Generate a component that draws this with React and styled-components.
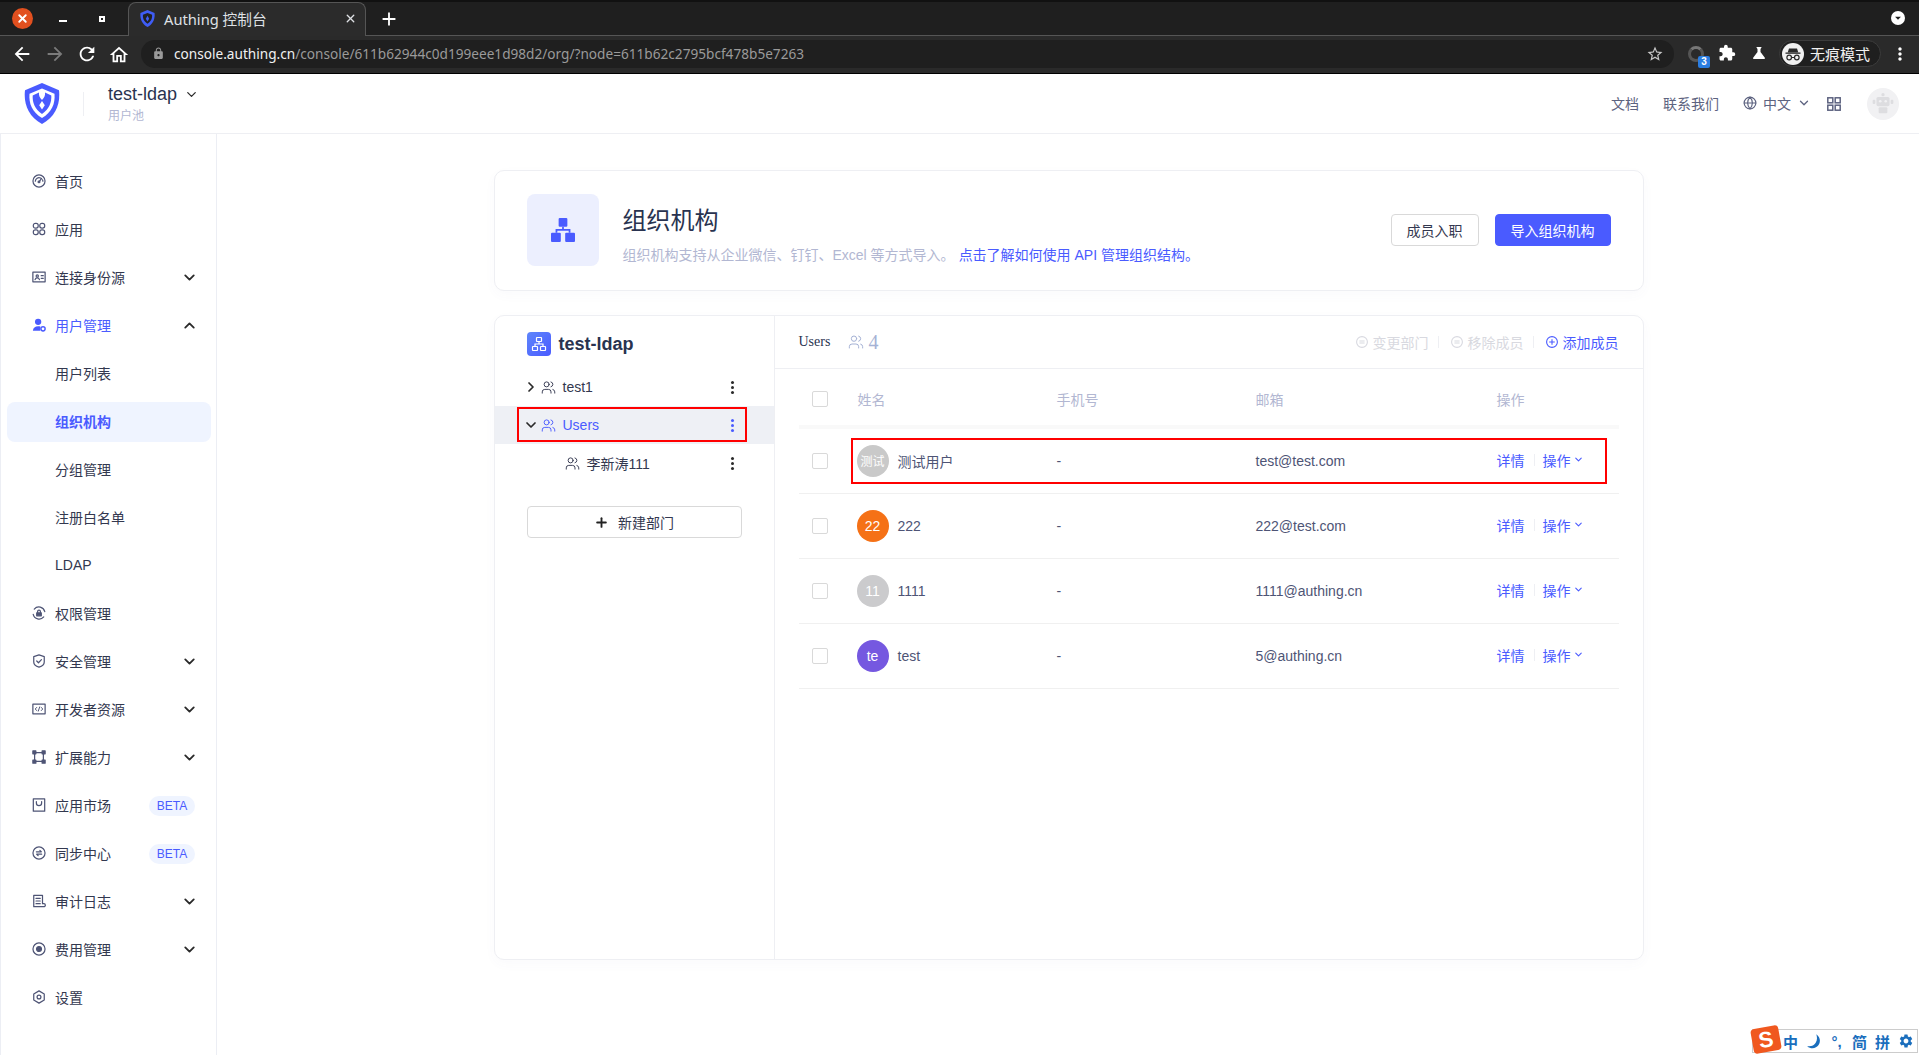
import React from 'react'
import styled, { createGlobalStyle } from 'styled-components'
import { ChevronDown, ChevronUp, ChevronRight, Users as UsersIcon, Plus, Globe, X } from 'lucide-react'
import {
  MdArrowBack,
  MdArrowForward,
  MdRefresh,
  MdOutlineHome,
  MdLock,
  MdStarBorder,
  MdExtension,
  MdScience,
  MdMoreVert,
  MdArrowDropDown,
  MdAdd,
  MdSettings,
} from 'react-icons/md'

const BLUE = '#4a5bff'
const FONT = '"Liberation Sans", "Noto Sans CJK SC", sans-serif'

const GlobalStyle = createGlobalStyle`
  * { box-sizing: border-box; }
  html, body { margin: 0; padding: 0; background: #fff; }
  body { font-family: ${FONT}; font-size: 14px; color: #33384f; overflow: hidden; }
`

/* ---------- icons ---------- */

const Svg = ({ children, size = 14, fill = 'none', color = 'currentColor' }) => (
  <svg width={size} height={size} viewBox="0 0 16 16" fill={fill} stroke={color} strokeWidth="1.4" strokeLinecap="round" strokeLinejoin="round">
    {children}
  </svg>
)

const navIcons = {
  home: (
    <Svg>
      <circle cx="8" cy="8" r="6.9" />
      <path d="M3.8 8.2a4.2 4.2 0 0 1 6-3.6M12 6.6c.3.5.4 1 .4 1.6M8 9l3-4" />
      <circle cx="8" cy="9" r="1" />
    </Svg>
  ),
  apps: (
    <Svg>
      <rect x="1.5" y="1.5" width="5.6" height="5.6" rx="2.4" />
      <rect x="8.9" y="1.5" width="5.6" height="5.6" rx="2.4" />
      <rect x="1.5" y="8.9" width="5.6" height="5.6" rx="2.4" />
      <rect x="8.9" y="8.9" width="5.6" height="5.6" rx="2.4" />
    </Svg>
  ),
  idcard: (
    <Svg>
      <rect x="1" y="2.5" width="14" height="11" />
      <circle cx="6" cy="6.8" r="1.3" />
      <path d="M3.5 11c.4-1.3 1.3-1.9 2.5-1.9s2.1.6 2.5 1.9M10.5 6.5h2.4M10.5 9.5h2.4" />
    </Svg>
  ),
  user: (
    <svg width="16" height="16" viewBox="0 0 16 16" fill={BLUE}>
      <circle cx="7" cy="4.4" r="3.6" />
      <path d="M1 14.5c.2-3.4 2.6-5.2 6-5.2 1 0 1.8.2 2.5.5v4.7z" />
      <circle cx="12.6" cy="12.4" r="2.4" fill="none" stroke={BLUE} strokeWidth="1.6" />
    </svg>
  ),
  perm: (
    <Svg>
      <path d="M14.6 6.5A6.9 6.9 0 0 0 2.6 3.6M1.4 9.5a6.9 6.9 0 0 0 12 2.9" />
      <rect x="5.4" y="7.8" width="5.2" height="3.4" fill="currentColor" />
      <path d="M6.4 7.4V6.2a1.6 1.6 0 0 1 3.2 0v1.2" />
    </Svg>
  ),
  shield: (
    <Svg>
      <path d="M8 1l6 2v6c0 3-2.6 5-6 6-3.4-1-6-3-6-6V3z" />
      <path d="M5.4 8l2 2 3.4-3.6" />
    </Svg>
  ),
  dev: (
    <Svg>
      <rect x="1" y="2.5" width="14" height="11" />
      <path d="M5.4 6.2L3.7 8l1.7 1.8M10.6 6.2L12.3 8l-1.7 1.8M8.8 5.6L7.2 10.4" strokeWidth="1.1" />
    </Svg>
  ),
  extend: (
    <Svg>
      <path d="M3 3h10v10H3z" />
      <rect x="1" y="1" width="3.4" height="3.4" fill="currentColor" />
      <rect x="11.6" y="1" width="3.4" height="3.4" fill="currentColor" />
      <rect x="1" y="11.6" width="3.4" height="3.4" fill="currentColor" />
      <rect x="11.6" y="11.6" width="3.4" height="3.4" fill="currentColor" />
    </Svg>
  ),
  market: (
    <Svg>
      <rect x="1.5" y="1" width="13" height="14" />
      <path d="M5 4v1.6a3 3 0 0 0 6 0V4" />
    </Svg>
  ),
  sync: (
    <Svg>
      <circle cx="8" cy="8" r="6.9" />
      <path d="M5 6.6h5.6L9 5M11 9.4H5.4L7 11" />
    </Svg>
  ),
  audit: (
    <Svg>
      <path d="M12 11V1.5H2v13h11.5a1.5 1.5 0 0 0 0-3.5H12" />
      <path d="M4.6 5h4.8M4.6 8h4.8M4.6 11h4.8" />
    </Svg>
  ),
  fee: (
    <Svg>
      <circle cx="8" cy="8" r="6.9" />
      <circle cx="8" cy="8" r="2.8" fill="currentColor" />
    </Svg>
  ),
  settings: (
    <Svg>
      <path d="M8 1l6 3.5v7L8 15l-6-3.5v-7z" />
      <circle cx="8" cy="8" r="2.2" />
    </Svg>
  ),
}

const Logo = () => (
  <svg width="36" height="41" viewBox="0 0 36 41">
    <path d="M18 0l17 7.2c1.5 13-3 26-17 33.8C4 33.2-.5 20.2 1 7.2z" fill={BLUE} />
    <path d="M18 5.5L30.5 10.7C31.3 20.5 28 29 18 35 8 29 4.7 20.5 5.5 10.7z" fill="#fff" />
    <path d="M15 9.5L8.7 12.5c-.4 7 2 13.5 9.3 18.5 7.3-5 9.7-11.5 9.3-18.5L21 9.5c.5 3-.8 5-3 7.5-2.2-2.5-3.5-4.5-3-7.5z" fill={BLUE} />
    <path d="M18 18l2.8 4.2L18 26.5l-2.8-4.3z" fill="#fff" />
  </svg>
)

const Favicon = () => (
  <svg width="15" height="17" viewBox="0 0 36 41">
    <path d="M18 0l17 7.2c1.5 13-3 26-17 33.8C4 33.2-.5 20.2 1 7.2z" fill="#3f5df5" />
    <path d="M18 7L29 11.5C29.7 20 27 27.5 18 33 9 27.5 6.3 20 7 11.5z" fill="#202124" />
    <path d="M18 14l4 7-4 7-4-7z" fill="#3f5df5" />
  </svg>
)

const OrgIcon = ({ size = 24, color = BLUE }) => (
  <svg width={size} height={size} viewBox="1 1 22 22" fill={color}>
    <rect x="8" y="1" width="8" height="8" rx="1" />
    <rect x="1" y="14.5" width="9" height="8.5" rx="1" />
    <rect x="14" y="14.5" width="9" height="8.5" rx="1" />
    <path d="M11.2 9h1.6v2h6v3.5h-1.6v-1.9H6.8v1.9H5.2V11h6z" />
  </svg>
)

const OrgOutline = () => (
  <svg width="16" height="16" viewBox="0 0 16 16" fill="none" stroke="#fff" strokeWidth="1.2">
    <rect x="5.5" y="1.5" width="5" height="4" rx=".5" />
    <rect x="1.5" y="10.5" width="5" height="4" rx=".5" />
    <rect x="9.5" y="10.5" width="5" height="4" rx=".5" />
    <path d="M8 5.5V8M4 10.5V8h8v2.5" />
  </svg>
)

const CircleAction = ({ kind }) => (
  <svg width="12" height="12" viewBox="0 0 12 12" fill="none" stroke="currentColor" strokeWidth="1.1">
    <circle cx="6" cy="6" r="5.4" />
    {kind === 'add' ? <path d="M6 3.2v5.6M3.2 6h5.6" /> : <path d="M3.4 5h5.2M3.4 7h5.2" />}
  </svg>
)

const Robot = () => (
  <svg width="24" height="24" viewBox="0 0 22 22" fill="#dddde0">
    <circle cx="11" cy="2.5" r="1.5" />
    <rect x="5" y="4.5" width="12" height="8.5" rx="1.5" />
    <rect x="1.5" y="7" width="2.5" height="4" rx="1" />
    <rect x="18" y="7" width="2.5" height="4" rx="1" />
    <rect x="7" y="14" width="8" height="5.5" rx="1" />
    <circle cx="8.5" cy="8.5" r="1.2" fill="#f1f1f3" />
    <circle cx="13.5" cy="8.5" r="1.2" fill="#f1f1f3" />
  </svg>
)

const GridIcon = () => (
  <svg width="14" height="14" viewBox="0 0 14 14" fill="none" stroke="#5d6380" strokeWidth="1.5">
    <rect x=".8" y=".8" width="5" height="5" />
    <rect x="8.2" y=".8" width="5" height="5" />
    <rect x=".8" y="8.2" width="5" height="5" />
    <rect x="8.2" y="8.2" width="5" height="5" />
  </svg>
)

const IncognitoIcon = () => (
  <svg width="18" height="18" viewBox="0 0 18 18" fill="#2a2a2a">
    <path d="M5 3.5h8l1.3 4H3.7z" />
    <rect x="1.5" y="7.5" width="15" height="1.3" />
    <circle cx="5.2" cy="12.5" r="2.3" fill="none" stroke="#2a2a2a" strokeWidth="1.2" />
    <circle cx="12.8" cy="12.5" r="2.3" fill="none" stroke="#2a2a2a" strokeWidth="1.2" />
    <rect x="7.4" y="12" width="3.2" height="1" />
  </svg>
)

const MoonIcon = () => (
  <svg width="16" height="16" viewBox="0 0 14 14" fill="#1a6ebd">
    <path d="M9 1c3.5 2.5 4 6.5 2 9.5S4.5 14.5 1 11.5c3.5.5 6-.5 7.5-3S9.8 3.5 9 1z" />
  </svg>
)

/* ---------- browser chrome ---------- */

const Page = styled.div`
  width: 1919px;
  height: 1055px;
  display: flex;
  flex-direction: column;
  overflow: hidden;
  position: relative;
`

const TabBar = styled.div`
  height: 36px;
  flex: none;
  background: #1f1f1f;
  border-top: 2px solid #111;
  border-bottom: 1px solid #555;
  display: flex;
  align-items: stretch;
  padding-left: 12px;
  color: #fff;
`

const WindowClose = styled.div`
  width: 21px;
  height: 21px;
  margin-top: 6px;
  border-radius: 50%;
  background: #e2501f;
  color: #fff;
  display: flex;
  align-items: center;
  justify-content: center;
`

const WindowMin = styled.div`
  width: 8px;
  height: 2px;
  margin: 18px 0 0 26px;
  background: #fff;
`

const WindowMax = styled.div`
  width: 6px;
  height: 6px;
  margin: 14px 0 0 32px;
  border: 2px solid #fff;
`

const Tab = styled.div`
  width: 238px;
  height: 34px;
  margin-left: 23px;
  background: #2b2b2b;
  border: 1px solid #555;
  border-bottom: 0;
  border-radius: 8px 8px 0 0;
  display: flex;
  align-items: center;
  padding: 0 8px 3px 11px;
  gap: 9px;
  font-family: "Noto Sans", "Noto Sans CJK SC", sans-serif;
  font-size: 14.7px;
  color: #dfe1e5;
`

const TabTitle = styled.span`
  flex: 1;
`

const NewTab = styled.div`
  margin: 6px 0 0 12px;
  color: #fff;
  display: flex;
`

const TabBarSpacer = styled.div`
  flex: 1;
`

const TabSearch = styled.div`
  width: 14px;
  height: 14px;
  margin: 9px 14px 0 0;
  border-radius: 50%;
  background: #fff;
  color: #1f1f1f;
  display: flex;
  align-items: center;
  justify-content: center;
`

const Toolbar = styled.div`
  height: 38px;
  flex: none;
  background: #2a2a2a;
  border-bottom: 1px solid #000;
  display: flex;
  align-items: center;
  padding: 0 0 2px 11px;
  color: #fff;
`

const NavBtn = styled.div`
  width: 22px;
  height: 22px;
  margin-right: ${(p) => p.$gap}px;
  color: ${(p) => (p.$dim ? '#7b7b7b' : '#fff')};
  display: flex;
`

const Omnibox = styled.div`
  width: 1533px;
  height: 28px;
  margin-left: -1px;
  border-radius: 14px;
  background: #1f1f1f;
  display: flex;
  align-items: center;
  padding: 0 10px 0 11px;
  font-family: "Noto Sans", sans-serif;
  font-size: 13.63px;
  color: #9a9a9a;
`

const LockWrap = styled.span`
  display: flex;
  width: 22px;
  color: #9a9a9a;
`

const UrlHost = styled.span`
  color: #f1f1f1;
`

const Url = styled.span`
  flex: 1;
`

const ToolIcon = styled.div`
  position: relative;
  width: 20px;
  height: 20px;
  margin-left: ${(p) => p.$left}px;
  color: ${(p) => p.$color || '#fff'};
  display: flex;
`

const ExtRing = styled.div`
  width: 16px;
  height: 16px;
  margin: 2px 0 0 2px;
  border-radius: 50%;
  border: 3px solid #555;
  border-top-color: #777;
`

const ExtBadge = styled.span`
  position: absolute;
  right: -4px;
  bottom: -4px;
  width: 12px;
  height: 12px;
  background: #2a7de1;
  border-radius: 2px;
  font-size: 10px;
  font-weight: 700;
  line-height: 12px;
  text-align: center;
  color: #fff;
`

const IncognitoPill = styled.div`
  width: 102px;
  height: 27px;
  margin-left: 9px;
  border: 1px solid #3c3c3c;
  border-radius: 14px;
  background: #1f1f1f;
  display: flex;
  align-items: center;
  gap: 6px;
  padding-left: 2px;
  font-size: 15px;
  color: #f1f1f1;
  font-family: "Noto Sans CJK SC", sans-serif;
`

const IncognitoBadge = styled.span`
  width: 22px;
  height: 22px;
  border-radius: 50%;
  background: #f1f1f1;
  display: flex;
  align-items: center;
  justify-content: center;
`

/* ---------- app header ---------- */

const AppHeader = styled.header`
  height: 60px;
  flex: none;
  background: #fff;
  border-bottom: 1px solid #eeeff3;
  display: flex;
  align-items: center;
  padding: 0 20px 0 24px;
`

const LogoDivider = styled.div`
  width: 1px;
  height: 24px;
  margin: 0 24px 0 23px;
  background: #eeeff3;
`

const PoolName = styled.div`
  display: flex;
  align-items: center;
  gap: 7px;
  font-size: 18px;
  line-height: 22px;
  color: #293350;
`

const PoolLabel = styled.div`
  font-size: 12px;
  line-height: 16px;
  margin-top: 3px;
  color: #b2b7d2;
`

const HeaderRight = styled.div`
  margin-left: auto;
  display: flex;
  align-items: center;
  color: #5d6380;
`

const HeaderLink = styled.span`
  margin: 0 ${(p) => p.$gap}px 2px 0;
  display: flex;
  align-items: center;
  gap: 6px;
`

const AvatarCircle = styled.div`
  width: 32px;
  height: 32px;
  margin-left: 26px;
  border-radius: 50%;
  background: #f1f1f3;
  display: flex;
  align-items: center;
  justify-content: center;
`

/* ---------- sidebar ---------- */

const Body = styled.div`
  flex: 1;
  min-height: 0;
  display: flex;
`

const Sidebar = styled.nav`
  width: 217px;
  flex: none;
  padding: 28px 5px 0 6px;
  border-left: 1px solid #eceef4;
  border-right: 1px solid #eceef4;
  display: flex;
  flex-direction: column;
  gap: 8px;
`

const NavItem = styled.div`
  height: 40px;
  flex: none;
  display: flex;
  align-items: center;
  gap: 9px;
  padding: 0 15px 2px ${(p) => (p.$sub ? 48 : 25)}px;
  border-radius: 8px;
  background: ${(p) => (p.$selected ? '#eff4ff' : 'transparent')};
  color: ${(p) => (p.$selected || p.$open ? BLUE : '#33384f')};
  font-weight: ${(p) => (p.$selected ? 700 : 400)};
`

const NavIcon = styled.span`
  width: 14px;
  height: 16px;
  color: #4e5475;
  display: flex;
  align-items: center;
  justify-content: center;
`

const NavChevron = styled.span`
  margin-left: auto;
  margin-right: -2px;
  color: #2a2a2a;
  display: flex;
`

const Beta = styled.span`
  margin: 2px 1px 0 auto;
  width: 46px;
  height: 20px;
  border-radius: 10px;
  background: #eff4ff;
  color: ${BLUE};
  font-size: 12px;
  line-height: 20px;
  text-align: center;
`

/* ---------- content ---------- */

const Content = styled.main`
  flex: 1;
  min-width: 0;
  padding: 36px 0 0 1px;
  display: flex;
  flex-direction: column;
  align-items: center;
  gap: 24px;
`

const Card = styled.section`
  width: 1150px;
  background: #fff;
  border: 1px solid #eeeff3;
  border-radius: 10px;
  box-shadow: 0 4px 12px rgba(80, 90, 160, 0.03);
`

const HeroCard = styled(Card)`
  height: 121px;
  flex: none;
  display: flex;
  align-items: center;
  padding: 0 32px 1px;
`

const HeroIcon = styled.div`
  width: 72px;
  height: 72px;
  border-radius: 8px;
  background: #eceffe;
  display: flex;
  align-items: center;
  justify-content: center;
`

const HeroText = styled.div`
  margin-left: 24px;
  padding-top: 10px;
  flex: 1;
`

const HeroTitle = styled.h1`
  margin: 0;
  font-size: 24px;
  line-height: 32px;
  font-weight: 400;
  color: #293350;
`

const HeroDesc = styled.p`
  margin: 8px 0 0;
  font-size: 14px;
  line-height: 20px;
  color: #b2b7d2;
`

const HeroLink = styled.a`
  color: ${BLUE};
  margin-left: 4px;
`

const Button = styled.button`
  width: ${(p) => p.$w}px;
  height: 32px;
  margin-left: 16px;
  border: 1px solid ${(p) => (p.$primary ? BLUE : '#d9d9d9')};
  border-radius: 4px;
  background: ${(p) => (p.$primary ? BLUE : '#fff')};
  color: ${(p) => (p.$primary ? '#fff' : '#33384f')};
  font-family: ${FONT};
  font-size: 14px;
  padding: 0;
`

const OrgCard = styled(Card)`
  height: 645px;
  flex: none;
  display: flex;
`

const TreePanel = styled.div`
  width: 280px;
  flex: none;
  border-right: 1px solid #eeeff3;
  padding-top: 16px;
`

const TreeTitle = styled.div`
  display: flex;
  align-items: center;
  gap: 8px;
  padding-left: 32px;
  height: 24px;
  font-size: 18px;
  font-weight: 700;
  color: #293350;
`

const TreeBadge = styled.span`
  width: 24px;
  height: 24px;
  border-radius: 4px;
  background: linear-gradient(135deg, #5f86fb, ${BLUE});
  display: flex;
  align-items: center;
  justify-content: center;
`

const TreeList = styled.div`
  margin-top: 12px;
`

const TreeRow = styled.div`
  position: relative;
  height: 38px;
  display: flex;
  align-items: center;
  padding: 0 40px 0 ${(p) => (p.$child ? 70 : 30)}px;
  background: ${(p) => (p.$active ? '#eef0f5' : 'transparent')};
  color: ${(p) => (p.$active ? BLUE : '#33384f')};
`

const TreeCaret = styled.span`
  width: 13px;
  margin-right: 3px;
  color: #2a2a2a;
  display: flex;
  justify-content: center;

  svg {
    flex: none;
  }
`

const TreeLabel = styled.span`
  margin-left: 7px;
  flex: 1;
`

const Dots = styled.span`
  width: 3px;
  height: 3px;
  border-radius: 50%;
  color: ${(p) => (p.$active ? BLUE : '#2a2a2a')};
  background: currentColor;
  box-shadow: 0 -5px 0 currentColor, 0 5px 0 currentColor;
`

const NewDeptButton = styled.button`
  width: 215px;
  height: 32px;
  margin: 24px 0 0 32px;
  border: 1px solid #d9d9d9;
  border-radius: 4px;
  background: #fff;
  color: #33384f;
  font-family: ${FONT};
  font-size: 14px;
  display: flex;
  align-items: center;
  justify-content: center;
  gap: 9px;
`

const ListPanel = styled.div`
  flex: 1;
  min-width: 0;
`

const ListHeader = styled.div`
  height: 53px;
  border-bottom: 1px solid #eeeff3;
  display: flex;
  align-items: center;
  padding: 0 24px;
`

const GroupName = styled.span`
  font-family: "Liberation Serif", serif;
  font-size: 14px;
  color: #293350;
  margin-right: 18px;
`

const GroupCount = styled.span`
  font-family: "Liberation Serif", serif;
  font-size: 20px;
  color: #a5b2d5;
  display: flex;
  align-items: center;
  gap: 4px;
`

const Actions = styled.div`
  margin-left: auto;
  display: flex;
  align-items: center;
`

const ActionLink = styled.span`
  display: flex;
  align-items: center;
  gap: 5px;
  color: ${(p) => (p.$on ? BLUE : '#d8d9e0')};
`

const ActionDivider = styled.span`
  width: 1px;
  height: 12px;
  margin: 0 12px 0 9px;
  background: #eeeff3;
`

const Table = styled.div`
  padding: 0 24px;
`

const TableRow = styled.div`
  position: relative;
  display: grid;
  grid-template-columns: 59px 199px 199px 241px 1fr;
  align-items: center;
  height: ${(p) => (p.$head ? 60 : 65)}px;
  padding: ${(p) => (p.$head ? '3px 0 0' : '0 0 1px')};
  border-bottom: ${(p) => (p.$head ? '4px solid #f9f9f9' : '1px solid #f0f0f0')};
  color: #4e5475;
`

const HeadCell = styled.span`
  color: #b2b7d2;
`

const Checkbox = styled.span`
  width: 16px;
  height: 16px;
  margin-left: 13px;
  border: 1px solid #d9d9d9;
  border-radius: 2px;
  background: #fff;
  display: block;
`

const NameCell = styled.div`
  display: flex;
  align-items: center;
  gap: 9px;
`

const Avatar = styled.span`
  width: 32px;
  height: 32px;
  margin-left: -1px;
  border-radius: 50%;
  background: ${(p) => p.$bg};
  color: #fff;
  font-size: ${(p) => (p.$small ? 12 : 14)}px;
  display: flex;
  align-items: center;
  justify-content: center;
`

const RowActions = styled.div`
  display: flex;
  align-items: center;
  margin-top: -2px;
  color: ${BLUE};
`

const RowDivider = styled.span`
  width: 1px;
  height: 12px;
  margin: 0 8px 0 9px;
  background: #eeeff3;
`

const RowMenu = styled.span`
  display: flex;
  align-items: center;
  gap: 2px;
`

/* red marks drawn over the screenshot */
const TreeMark = styled.div`
  position: absolute;
  left: 22px;
  right: 27px;
  top: 1px;
  bottom: 2px;
  border: 2px solid #f00;
  pointer-events: none;
`

const RowMark = styled.div`
  position: absolute;
  left: 52px;
  width: 756px;
  top: 9px;
  height: 46px;
  border: 2px solid #f00;
  pointer-events: none;
`

/* sogou ime status bar */
const Ime = styled.div`
  position: absolute;
  right: 1px;
  bottom: 2px;
  width: 166px;
  height: 24px;
  background: #fff;
  border: 1px solid #ccc;
  display: flex;
  align-items: center;
  color: #1a6ebd;
  font-weight: 700;
  font-size: 15px;
  padding-left: 26px;
`

const ImeLogo = styled.div`
  position: absolute;
  left: -1px;
  top: -3px;
  width: 28px;
  height: 25px;
  background: #f0581f;
  border-radius: 4px;
  transform: rotate(-10deg);
  color: #fff;
  font-family: "Liberation Sans", sans-serif;
  font-size: 22px;
  font-weight: 700;
  line-height: 25px;
  text-align: center;
`

const ImeItem = styled.span`
  width: 23px;
  display: flex;
  justify-content: center;
`

const nav = [
  { label: '首页', icon: 'home' },
  { label: '应用', icon: 'apps' },
  { label: '连接身份源', icon: 'idcard', chevron: 'down' },
  { label: '用户管理', icon: 'user', chevron: 'up', open: true },
  { label: '用户列表', sub: true },
  { label: '组织机构', sub: true, selected: true },
  { label: '分组管理', sub: true },
  { label: '注册白名单', sub: true },
  { label: 'LDAP', sub: true },
  { label: '权限管理', icon: 'perm' },
  { label: '安全管理', icon: 'shield', chevron: 'down' },
  { label: '开发者资源', icon: 'dev', chevron: 'down' },
  { label: '扩展能力', icon: 'extend', chevron: 'down' },
  { label: '应用市场', icon: 'market', beta: true },
  { label: '同步中心', icon: 'sync', beta: true },
  { label: '审计日志', icon: 'audit', chevron: 'down' },
  { label: '费用管理', icon: 'fee', chevron: 'down' },
  { label: '设置', icon: 'settings' },
]

const members = [
  { short: '测试', name: '测试用户', email: 'test@test.com', bg: '#c9c9c9', small: true, marked: true },
  { short: '22', name: '222', email: '222@test.com', bg: '#f57116' },
  { short: '11', name: '1111', email: '1111@authing.cn', bg: '#cbcbcd' },
  { short: 'te', name: 'test', email: '5@authing.cn', bg: '#7558e0' },
]

const App = () => (
  <Page>
    <GlobalStyle />

    <TabBar>
      <WindowClose><X size={13} strokeWidth={3.5} /></WindowClose>
      <WindowMin />
      <WindowMax />
      <Tab>
        <Favicon />
        <TabTitle>Authing 控制台</TabTitle>
        <X size={13} strokeWidth={2.5} />
      </Tab>
      <NewTab><MdAdd size={22} /></NewTab>
      <TabBarSpacer />
      <TabSearch><MdArrowDropDown size={16} /></TabSearch>
    </TabBar>

    <Toolbar>
      <NavBtn $gap={11}><MdArrowBack size={22} /></NavBtn>
      <NavBtn $gap={10} $dim><MdArrowForward size={22} /></NavBtn>
      <NavBtn $gap={10}><MdRefresh size={22} /></NavBtn>
      <NavBtn $gap={12}><MdOutlineHome size={24} /></NavBtn>
      <Omnibox>
        <LockWrap><MdLock size={13} /></LockWrap>
        <Url><UrlHost>console.authing.cn</UrlHost>/console/611b62944c0d199eee1d98d2/org/?node=611b62c2795bcf478b5e7263</Url>
        <MdStarBorder size={18} color="#c7c7c7" />
      </Omnibox>
      <ToolIcon $left={12}><ExtRing /><ExtBadge>3</ExtBadge></ToolIcon>
      <ToolIcon $left={12}><MdExtension size={18} /></ToolIcon>
      <ToolIcon $left={12}><MdScience size={18} /></ToolIcon>
      <IncognitoPill>
        <IncognitoBadge><IncognitoIcon /></IncognitoBadge>
        无痕模式
      </IncognitoPill>
      <ToolIcon $left={9}><MdMoreVert size={20} /></ToolIcon>
    </Toolbar>

    <AppHeader>
      <Logo />
      <LogoDivider />
      <div>
        <PoolName>test-ldap <ChevronDown size={15} strokeWidth={2} color="#2a2a2a" /></PoolName>
        <PoolLabel>用户池</PoolLabel>
      </div>
      <HeaderRight>
        <HeaderLink $gap={24}>文档</HeaderLink>
        <HeaderLink $gap={24}>联系我们</HeaderLink>
        <HeaderLink $gap={16}>
          <Globe size={14} />
          中文
          <ChevronDown size={14} strokeWidth={2.2} />
        </HeaderLink>
        <GridIcon />
        <AvatarCircle><Robot /></AvatarCircle>
      </HeaderRight>
    </AppHeader>

    <Body>
      <Sidebar>
        {nav.map((item) => (
          <NavItem key={item.label} $sub={item.sub} $selected={item.selected} $open={item.open}>
            {item.icon && <NavIcon>{navIcons[item.icon]}</NavIcon>}
            {item.label}
            {item.chevron === 'down' && <NavChevron><ChevronDown size={17} strokeWidth={2.6} /></NavChevron>}
            {item.chevron === 'up' && <NavChevron><ChevronUp size={17} strokeWidth={2.6} /></NavChevron>}
            {item.beta && <Beta>BETA</Beta>}
          </NavItem>
        ))}
      </Sidebar>

      <Content>
        <HeroCard>
          <HeroIcon><OrgIcon /></HeroIcon>
          <HeroText>
            <HeroTitle>组织机构</HeroTitle>
            <HeroDesc>
              组织机构支持从企业微信、钉钉、Excel 等方式导入。
              <HeroLink>点击了解如何使用 API 管理组织结构。</HeroLink>
            </HeroDesc>
          </HeroText>
          <Button $w={88}>成员入职</Button>
          <Button $w={116} $primary>导入组织机构</Button>
        </HeroCard>

        <OrgCard>
          <TreePanel>
            <TreeTitle>
              <TreeBadge><OrgOutline /></TreeBadge>
              test-ldap
            </TreeTitle>
            <TreeList>
              <TreeRow>
                <TreeCaret><ChevronRight size={16} strokeWidth={2.6} /></TreeCaret>
                <UsersIcon size={15} strokeWidth={1.5} />
                <TreeLabel>test1</TreeLabel>
                <Dots />
              </TreeRow>
              <TreeRow $active>
                <TreeCaret><ChevronDown size={16} strokeWidth={2.6} /></TreeCaret>
                <UsersIcon size={15} strokeWidth={1.5} />
                <TreeLabel>Users</TreeLabel>
                <Dots $active />
                <TreeMark />
              </TreeRow>
              <TreeRow $child>
                <UsersIcon size={15} strokeWidth={1.5} />
                <TreeLabel>李新涛111</TreeLabel>
                <Dots />
              </TreeRow>
            </TreeList>
            <NewDeptButton><Plus size={15} strokeWidth={3} color="#222" />新建部门</NewDeptButton>
          </TreePanel>

          <ListPanel>
            <ListHeader>
              <GroupName>Users</GroupName>
              <GroupCount><UsersIcon size={16} strokeWidth={1.5} />4</GroupCount>
              <Actions>
                <ActionLink><CircleAction />变更部门</ActionLink>
                <ActionDivider />
                <ActionLink><CircleAction />移除成员</ActionLink>
                <ActionDivider />
                <ActionLink $on><CircleAction kind="add" />添加成员</ActionLink>
              </Actions>
            </ListHeader>
            <Table>
              <TableRow $head>
                <Checkbox />
                <HeadCell>姓名</HeadCell>
                <HeadCell>手机号</HeadCell>
                <HeadCell>邮箱</HeadCell>
                <HeadCell>操作</HeadCell>
              </TableRow>
              {members.map((m) => (
                <TableRow key={m.name}>
                  <Checkbox />
                  <NameCell>
                    <Avatar $bg={m.bg} $small={m.small}>{m.short}</Avatar>
                    {m.name}
                  </NameCell>
                  <span>-</span>
                  <span>{m.email}</span>
                  <RowActions>
                    详情
                    <RowDivider />
                    <RowMenu>操作<ChevronDown size={11} strokeWidth={2.4} /></RowMenu>
                  </RowActions>
                  {m.marked && <RowMark />}
                </TableRow>
              ))}
            </Table>
          </ListPanel>
        </OrgCard>
      </Content>
    </Body>

    <Ime>
      <ImeLogo>S</ImeLogo>
      <ImeItem>中</ImeItem>
      <ImeItem><MoonIcon /></ImeItem>
      <ImeItem>°,</ImeItem>
      <ImeItem>简</ImeItem>
      <ImeItem>拼</ImeItem>
      <ImeItem><MdSettings size={16} /></ImeItem>
    </Ime>
  </Page>
)

export default App
